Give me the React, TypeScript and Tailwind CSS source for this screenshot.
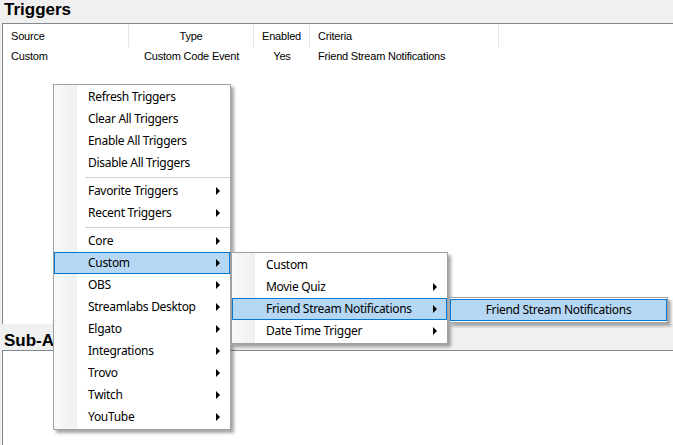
import React from 'react';

type Item = { label: string; arrow?: boolean; active?: boolean } | 'sep';

const mainMenu: Item[] = [
  { label: 'Refresh Triggers' },
  { label: 'Clear All Triggers' },
  { label: 'Enable All Triggers' },
  { label: 'Disable All Triggers' },
  'sep',
  { label: 'Favorite Triggers', arrow: true },
  { label: 'Recent Triggers', arrow: true },
  'sep',
  { label: 'Core', arrow: true },
  { label: 'Custom', arrow: true, active: true },
  { label: 'OBS', arrow: true },
  { label: 'Streamlabs Desktop', arrow: true },
  { label: 'Elgato', arrow: true },
  { label: 'Integrations', arrow: true },
  { label: 'Trovo', arrow: true },
  { label: 'Twitch', arrow: true },
  { label: 'YouTube', arrow: true },
];

const customMenu: Item[] = [
  { label: 'Custom' },
  { label: 'Movie Quiz', arrow: true },
  { label: 'Friend Stream Notifications', arrow: true, active: true },
  { label: 'Date Time Trigger', arrow: true },
];

const Arrow = () => (
  <span className="block w-0 h-0 border-y-[4px] border-y-transparent border-l-[4px] border-l-black" />
);

const Menu: React.FC<{ items: Item[]; className: string }> = ({ items, className }) => (
  <div
    className={`absolute border border-[#a0a0a0] py-[1px] bg-[linear-gradient(to_right,#f9f9f9_0px,#f0f0f0_23px,#ffffff_23px)] shadow-[3px_3px_3px_rgba(0,0,0,0.35)] ${className}`}
  >
    {items.map((it, i) =>
      it === 'sep' ? (
        <div key={i} className="h-[6px] flex items-center pl-[31px]">
          <div className="h-px w-full bg-[#d3d3d3]" />
        </div>
      ) : (
        <div
          key={i}
          className={`h-[22px] flex items-center justify-between pl-[33px] pr-[9px] border ${
            it.active ? 'bg-[#b5d7f3] border-[#0078d7]' : 'border-transparent'
          }`}
        >
          <span>{it.label}</span>
          {it.arrow && <Arrow />}
        </div>
      )
    )}
  </div>
);

export default function App() {
  const cols = [
    { name: 'Source', w: 'w-[126px]', align: 'text-left pl-[8px]', val: 'Custom' },
    { name: 'Type', w: 'w-[125px]', align: 'text-center', val: 'Custom Code Event' },
    { name: 'Enabled', w: 'w-[56px]', align: 'text-center', val: 'Yes' },
    { name: 'Criteria', w: 'w-[189px]', align: 'text-left pl-[8px]', val: 'Friend Stream Notifications' },
  ];

  return (
    <div className="relative w-[673px] h-[445px] bg-[#f0f0f0] overflow-hidden text-black font-['Liberation_Sans',Arial,sans-serif]">
      <div className="h-[23px] pl-[4px] text-[17px] font-bold leading-[19px]">Triggers</div>
      <div className="ml-[2px] h-[301px] border-l border-t border-[#828790] bg-white text-[11px] tracking-[-0.2px]">
        <div className="flex h-[23px]">
          {cols.map((c) => (
            <div key={c.name} className={`${c.w} ${c.align} h-[23px] leading-[24px] border-r border-[#e5e5e5]`}>
              {c.name}
            </div>
          ))}
        </div>
        <div className="flex h-[18px] leading-[19px]">
          {cols.map((c) => (
            <div key={c.name} className={`${c.w} ${c.align}`}>
              {c.val}
            </div>
          ))}
        </div>
      </div>
      <div className="h-[26px] pl-[4px] pt-[7px] text-[17px] font-bold leading-[19px]">Sub-Actions</div>
      <div className="ml-[2px] h-[95px] border-l border-t border-[#828790] bg-white" />

      <div className="font-['Noto_Sans',sans-serif] text-[12px] tracking-[-0.3px]">
        <Menu items={mainMenu} className="left-[53px] top-[84px] w-[178px]" />
        <Menu items={customMenu} className="left-[231px] top-[252px] w-[217px]" />
        <div className="absolute left-[449px] top-[297px] w-[219px] border border-[#a0a0a0] py-[1px] bg-white shadow-[3px_3px_3px_rgba(0,0,0,0.35)]">
          <div className="h-[22px] flex items-center justify-center border bg-[#b5d7f3] border-[#0078d7]">
            Friend Stream Notifications
          </div>
        </div>
      </div>
    </div>
  );
}
